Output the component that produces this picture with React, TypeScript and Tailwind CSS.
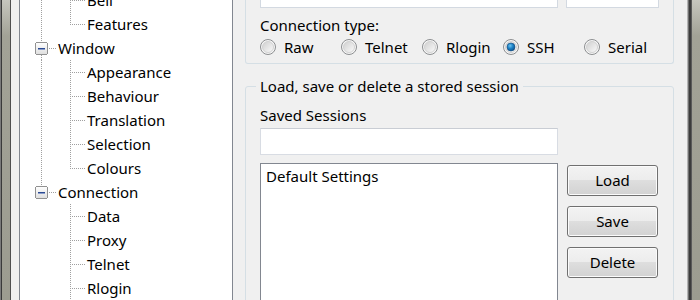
import React from 'react'

type Row = {
    label: string
    root?: boolean
    lineAbove?: boolean
    lineBelow?: boolean
    rootLine?: boolean
    last?: boolean
}

const rows: Row[] = [
    { label: 'Bell', rootLine: true },
    { label: 'Features', rootLine: true, last: true },
    { label: 'Window', root: true, lineAbove: true, lineBelow: true },
    { label: 'Appearance', rootLine: true },
    { label: 'Behaviour', rootLine: true },
    { label: 'Translation', rootLine: true },
    { label: 'Selection', rootLine: true },
    { label: 'Colours', rootLine: true, last: true },
    { label: 'Connection', root: true, lineAbove: true },
    { label: 'Data' },
    { label: 'Proxy' },
    { label: 'Telnet' },
    { label: 'Rlogin' },
]

const DOT = '#a0a0a0'

const RootGutter = ({ row }: { row: Row }) => (
    <svg width="38" height="24" viewBox="0 0 38 24" shapeRendering="crispEdges" className="shrink-0">
        <defs>
            <linearGradient id="box" x1="0" y1="0" x2="0" y2="1">
                <stop offset="0" stopColor="#ffffff" />
                <stop offset="1" stopColor="#dedede" />
            </linearGradient>
        </defs>
        {row.lineAbove && <line x1="21.5" y1="0" x2="21.5" y2="6" stroke={DOT} strokeDasharray="1 1" />}
        {row.lineBelow && <line x1="21.5" y1="19" x2="21.5" y2="24" stroke={DOT} strokeDasharray="1 1" />}
        <line x1="29" y1="12.5" x2="37" y2="12.5" stroke={DOT} strokeDasharray="1 1" />
        <rect x="15.5" y="6.5" width="12" height="12" rx="2" fill="url(#box)" stroke="#919191" />
        <rect x="18" y="12" width="7" height="1" fill="#2b4a92" />
        <rect x="18" y="13" width="7" height="1" fill="#8a9cc8" />
    </svg>
)

const ChildGutter = ({ row }: { row: Row }) => (
    <svg width="67" height="24" viewBox="0 0 67 24" shapeRendering="crispEdges" className="shrink-0">
        {row.rootLine && <line x1="21.5" y1="0" x2="21.5" y2="24" stroke={DOT} strokeDasharray="1 1" />}
        <line x1="50.5" y1="0" x2="50.5" y2={row.last ? 13 : 24} stroke={DOT} strokeDasharray="1 1" />
        <line x1="52" y1="12.5" x2="66" y2="12.5" stroke={DOT} strokeDasharray="1 1" />
    </svg>
)

const Radio = ({ label, checked }: { label: string; checked?: boolean }) => (
    <div className="flex w-[81px] items-center gap-[8px]">
        <svg width="16" height="16" viewBox="0 0 16 16" className="shrink-0">
            <defs>
                <linearGradient id="rin" x1="0" y1="0" x2="1" y2="1">
                    <stop offset="0" stopColor="#cfcfcf" />
                    <stop offset="1" stopColor="#fbfbfb" />
                </linearGradient>
                <radialGradient id="rdot" cx="0.4" cy="0.35" r="0.7">
                    <stop offset="0" stopColor="#6cc4f0" />
                    <stop offset="0.5" stopColor="#1a7fc4" />
                    <stop offset="1" stopColor="#0b4f8a" />
                </radialGradient>
            </defs>
            <circle cx="8" cy="8" r="7.5" fill="#f6f6f6" stroke="#8c8e90" />
            <circle cx="8" cy="8" r="5.5" fill="url(#rin)" stroke="#d2d2d2" />
            {checked && <circle cx="8" cy="8" r="4" fill="url(#rdot)" stroke="#174d7d" strokeWidth="0.6" />}
        </svg>
        <span className="leading-[20px]">{label}</span>
    </div>
)

const Button = ({ label }: { label: string }) => (
    <div className="flex h-[31px] w-[91px] items-center justify-center rounded-[3px] border border-[#707070] bg-[linear-gradient(to_bottom,#f3f3f3_0%,#ececec_50%,#dedede_50%,#d2d2d2_100%)] shadow-[inset_0_0_0_1px_#fbfbfb]">
        {label}
    </div>
)

export default function App() {
    return (
        <div className="flex h-[300px] w-[700px] overflow-hidden bg-[#f0f0f0] font-['Noto_Sans',sans-serif] text-[15px] text-black">
            <div className="w-px bg-[#7a7a7a]" />
            <div className="w-px bg-[#3a3a3a]" />
            <div className="w-[8px] bg-[linear-gradient(to_bottom,#c6c6be_0%,#a2a296_12%,#9c9c90_100%)]" />
            <div className="w-px bg-[#505050]" />

            <div className="flex w-[676px] pl-[8px]">
                {/* tree */}
                <div className="h-full w-[214px] shrink-0 overflow-hidden border-x border-[#828790] bg-white">
                    <div className="-mt-[12px]">
                        {rows.map((row) => (
                            <div key={row.label} className="flex h-[24px] items-center">
                                {row.root ? <RootGutter row={row} /> : <ChildGutter row={row} />}
                                <span className="leading-[20px]">{row.label}</span>
                            </div>
                        ))}
                    </div>
                </div>

                {/* options */}
                <div className="ml-[12px] w-[429px] shrink-0">
                    <div className="-mt-[16px] rounded-b-[3px] border-x border-b border-[#d5dfe5] pb-[6px] pl-[14px]">
                        <div className="flex gap-[8px]">
                            <div className="h-[24px] w-[298px] border border-[#d3d9e1] bg-white" />
                            <div className="h-[24px] w-[93px] border border-[#d3d9e1] bg-white" />
                        </div>
                        <div className="mt-[7px] leading-[20px]">Connection type:</div>
                        <div className="mt-[2px] flex">
                            <Radio label="Raw" />
                            <Radio label="Telnet" />
                            <Radio label="Rlogin" />
                            <Radio label="SSH" checked />
                            <Radio label="Serial" />
                        </div>
                    </div>

                    <div className="mt-[22px] h-[300px] rounded-[3px] border border-[#d5dfe5] pl-[14px]">
                        <div className="-ml-[4px] -mt-[11px] w-fit bg-[#f0f0f0] px-[4px] leading-[20px]">
                            Load, save or delete a stored session
                        </div>
                        <div className="mt-[9px] leading-[20px]">Saved Sessions</div>
                        <div className="mt-[3px] h-[27px] w-[298px] border border-[#d8dce3] border-t-[#c9cdd4] bg-white" />
                        <div className="mt-[8px] flex">
                            <div className="h-[200px] w-[298px] border border-[#828790] bg-white pl-[5px] pt-[2px]">
                                <div className="leading-[20px]">Default Settings</div>
                            </div>
                            <div className="ml-[9px] mt-[2px] flex flex-col gap-[10px]">
                                <Button label="Load" />
                                <Button label="Save" />
                                <Button label="Delete" />
                            </div>
                        </div>
                    </div>
                </div>
            </div>

            <div className="w-px bg-[#b4b4b4]" />
            <div className="w-px bg-[#6e6e6e]" />
            <div className="w-[2px] bg-[#3c3c3c]" />
            <div className="w-px bg-[#5a5a5a]" />
            <div className="w-[8px] bg-[linear-gradient(to_bottom,#c6c6be_0%,#a2a296_12%,#9c9c90_100%)]" />
        </div>
    )
}
